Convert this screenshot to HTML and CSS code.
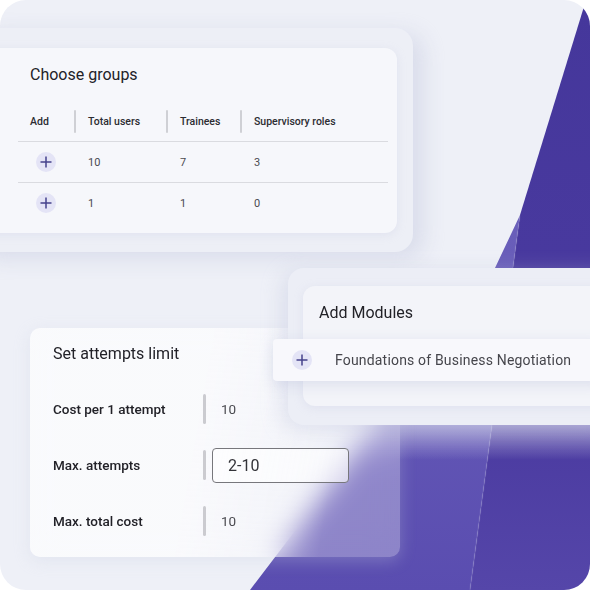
FILE: index.html
```html
<!DOCTYPE html>
<html lang="en">
<head>
  <meta charset="UTF-8">
  <title>Group setup</title>
  <link rel="stylesheet" href="styles.css">
</head>
<body>

  <div class="scene">

    <!-- purple prism behind the panels -->
    <svg class="backdrop" viewBox="0 0 590 590" width="590" height="590">
      <defs>
        <linearGradient id="deep" x1="0" y1="0" x2="0" y2="1">
          <stop offset="0" stop-color="#45379b"/>
          <stop offset="0.7" stop-color="#4a3aa0"/>
          <stop offset="1" stop-color="#5546a9"/>
        </linearGradient>
        <linearGradient id="facet" x1="0" y1="0" x2="0" y2="1">
          <stop offset="0" stop-color="#6a5fba"/>
          <stop offset="1" stop-color="#5a4db0"/>
        </linearGradient>
        <linearGradient id="haze" x1="0" y1="0" x2="0" y2="1">
          <stop offset="0" stop-color="#eceef8" stop-opacity="0.55"/>
          <stop offset="1" stop-color="#eceef8" stop-opacity="0"/>
        </linearGradient>
      </defs>
      <polygon points="586,0 590,0 590,590 470,590 520,215" fill="url(#deep)"/>
      <polygon points="520,215 470,590 250,590 495,268" fill="url(#facet)"/>
      <line x1="520" y1="215" x2="470" y2="590" stroke="#ffffff" stroke-opacity="0.06" stroke-width="2"/>
      <rect x="250" y="424" width="340" height="36" fill="url(#haze)"/>
    </svg>

    <!-- Choose groups -->
    <section class="glass glass-groups">
      <div class="card card-groups">
        <h3 class="card-title">Choose groups</h3>
        <div class="groups-table">
          <div class="groups-row groups-head">
            <div class="cell">Add</div>
            <div class="cell sep">Total users</div>
            <div class="cell sep">Trainees</div>
            <div class="cell sep">Supervisory roles</div>
          </div>
          <div class="groups-row">
            <div class="cell cell-add">
              <span class="plus"><svg viewBox="0 0 12 12" width="12" height="12"><path d="M6 0.5v11M0.5 6h11"/></svg></span>
            </div>
            <div class="cell pad">10</div>
            <div class="cell pad">7</div>
            <div class="cell pad">3</div>
          </div>
          <div class="groups-row">
            <div class="cell cell-add">
              <span class="plus"><svg viewBox="0 0 12 12" width="12" height="12"><path d="M6 0.5v11M0.5 6h11"/></svg></span>
            </div>
            <div class="cell pad">1</div>
            <div class="cell pad">1</div>
            <div class="cell pad">0</div>
          </div>
        </div>
      </div>
    </section>

    <!-- Set attempts limit -->
    <section class="glass glass-attempts">
      <h3 class="card-title">Set attempts limit</h3>
      <div class="attempts">
        <div class="attempt-row">
          <span class="attempt-label">Cost per 1 attempt</span>
          <span class="bar"></span>
          <span class="attempt-value">10</span>
        </div>
        <div class="attempt-row">
          <span class="attempt-label">Max. attempts</span>
          <span class="bar"></span>
          <span class="attempt-input">2-10</span>
        </div>
        <div class="attempt-row">
          <span class="attempt-label">Max. total cost</span>
          <span class="bar"></span>
          <span class="attempt-value">10</span>
        </div>
      </div>
    </section>

    <!-- Add Modules -->
    <section class="glass glass-modules">
      <div class="card card-modules">
        <h3 class="card-title">Add Modules</h3>
      </div>
    </section>

    <div class="module-item">
      <span class="plus"><svg viewBox="0 0 12 12" width="12" height="12"><path d="M6 0.5v11M0.5 6h11"/></svg></span>
      <span class="module-name">Foundations of Business Negotiation</span>
    </div>

  </div>

</body>
</html>
```

FILE: styles.css
```css
body {
  margin: 0;
  background: #ffffff;
  font-family: Roboto, 'Liberation Sans', sans-serif;
}

.scene {
  position: relative;
  width: 590px;
  height: 590px;
  overflow: hidden;
  border-radius: 26px;
  background: #eef0f7;
}

.backdrop {
  position: absolute;
  top: 0;
  left: 0;
}

h3 {
  margin: 0;
}

.card-title {
  font-size: 16px;
  line-height: 20px;
  font-weight: 400;
  color: #222228;
}

/* frosted panels */

.glass {
  position: absolute;
  box-sizing: border-box;
}

.glass-groups {
  top: 28px;
  left: -30px;
  width: 443px;
  height: 224px;
  padding: 20px 16px 0 10px;
  border-radius: 18px;
  background: #edeff6;
  box-shadow: 10px 6px 22px rgba(190, 196, 220, 0.45);
}

.card {
  box-sizing: border-box;
  background: #f6f7fb;
  border-radius: 12px;
  box-shadow: 0 2px 8px rgba(200, 204, 225, 0.35);
}

.card-groups {
  height: 185px;
  padding: 17px 9px 0 38px;
}

.card-groups .card-title {
  margin-left: 12px;
}

.groups-table {
  margin-top: 16px;
}

.groups-row {
  display: grid;
  grid-template-columns: 56px 92px 74px 1fr;
  height: 40px;
  border-bottom: 1px solid #dadbe0;
}

.groups-row:last-child {
  border-bottom: none;
}

.cell {
  display: flex;
  align-items: center;
  padding-left: 12px;
  font-size: 11px;
  color: #4a4a50;
}

.groups-head .cell {
  font-size: 10.5px;
  font-weight: 500;
  color: #2c2c32;
}

.cell.sep,
.cell.pad {
  padding-left: 14px;
}

.cell.sep {
  position: relative;
}

.cell.sep::before {
  content: "";
  position: absolute;
  left: 0;
  top: 9px;
  width: 2px;
  height: 23px;
  border-radius: 1px;
  background: #cfd0d5;
}

.cell-add {
  justify-content: center;
  padding-left: 0;
}

.plus {
  display: flex;
  align-items: center;
  justify-content: center;
  width: 20px;
  height: 20px;
  border-radius: 50%;
  background: #e4e4f6;
}

.plus svg path {
  stroke: #45428c;
  stroke-width: 1.5;
  fill: none;
}

/* attempts panel */

.glass-attempts {
  top: 328px;
  left: 30px;
  width: 370px;
  height: 229px;
  padding: 16px 0 0 23px;
  border-radius: 10px;
  background: linear-gradient(100deg, rgba(251, 251, 253, 0.88) 45%, rgba(248, 248, 252, 0.32) 80%);
  backdrop-filter: blur(14px);
  box-shadow: 0 4px 16px rgba(200, 204, 225, 0.3);
}

.attempts {
  margin-top: 17px;
}

.attempt-row {
  display: grid;
  grid-template-columns: 150px 3px 1fr;
  align-items: center;
  height: 56px;
}

.attempt-label {
  font-size: 13.5px;
  font-weight: 500;
  color: #222228;
}

.bar {
  height: 30px;
  border-radius: 2px;
  background: #cbcbd0;
}

.attempt-value {
  padding-left: 15px;
  font-size: 13.5px;
  color: #4a4a50;
}

.attempt-input {
  box-sizing: border-box;
  width: 137px;
  height: 35px;
  margin-left: 6px;
  padding-left: 15px;
  display: flex;
  align-items: center;
  border: 1px solid #77777c;
  border-radius: 4px;
  font-size: 16px;
  color: #333338;
  background: rgba(255, 255, 255, 0.6);
}

/* modules panel */

.glass-modules {
  top: 268px;
  left: 288px;
  width: 330px;
  height: 157px;
  padding: 18px 0 0 15px;
  border-radius: 16px;
  background: #eceef6;
  box-shadow: -6px 4px 20px rgba(190, 196, 220, 0.4);
}

.card-modules {
  height: 120px;
  padding: 17px 0 0 16px;
  background: #f3f4f9;
}

.module-item {
  position: absolute;
  top: 339px;
  left: 273px;
  width: 330px;
  height: 42px;
  box-sizing: border-box;
  display: flex;
  align-items: center;
  gap: 23px;
  padding-left: 19px;
  border-radius: 4px;
  background: #f8f8fc;
  box-shadow: 0 4px 14px rgba(170, 176, 210, 0.3);
}

.module-name {
  font-size: 14px;
  letter-spacing: 0.18px;
  color: #46464c;
}
```
